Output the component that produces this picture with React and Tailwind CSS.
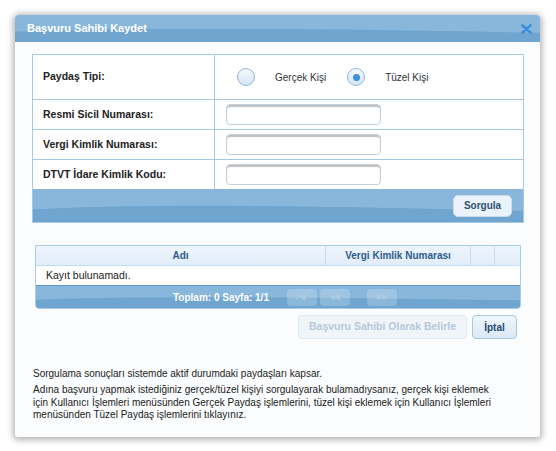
import React from "react";

// Blue gradient bar with a soft wave, used in title, action bar and pager
function Wave() {
  return (
    <svg
      className="absolute inset-0 h-full w-full pointer-events-none"
      viewBox="0 0 100 10"
      preserveAspectRatio="none"
    >
      <path d="M0 6.2 C 25 4.2, 60 5.2, 100 6.6 L100 10 L0 10 Z" fill="#6fa5cf" />
    </svg>
  );
}

function Radio({ checked }) {
  return (
    <span className="relative inline-flex h-[18px] w-[18px] shrink-0 items-center justify-center rounded-full border border-[#8fb8dc] bg-gradient-to-b from-[#f4f8fc] to-[#d6e6f5]">
      {checked && <span className="h-[7px] w-[7px] rounded-full bg-[#3f8fdb]" />}
    </span>
  );
}

function Field() {
  return (
    <div className="h-[21px] w-[155px] rounded-[4px] border border-[#c3cfd9] bg-white shadow-[inset_0_2px_1px_rgba(0,0,0,0.25)]" />
  );
}

function PagerBtn({ children, className = "" }) {
  return (
    <span
      className={
        "relative flex h-[17px] w-[30px] items-center justify-center rounded-[4px] bg-white/20 " + className
      }
    >
      {children}
    </span>
  );
}

const rows = ["Resmi Sicil Numarası:", "Vergi Kimlik Numarası:", "DTVT İdare Kimlik Kodu:"];

export default function App() {
  return (
    <div
      className="h-[451px] w-[556px] bg-white pl-[15px] pt-[15px]"
      style={{ fontFamily: "'Liberation Sans', Arial, sans-serif" }}
    >
      <div className="h-[422px] w-[525px] overflow-hidden rounded-t-[4px] rounded-b-[3px] bg-[#fafcfd] shadow-[0_1px_6px_2px_rgba(0,0,0,0.3)]">
        {/* title bar */}
        <div className="relative flex h-[27px] items-center justify-between bg-[#89b7db] pl-[12px] pr-[8px]">
          <Wave />
          <span className="relative text-[11px] font-bold text-white">Başvuru Sahibi Kaydet</span>
          <svg className="relative" width="11" height="10" viewBox="0 0 11 10">
            <path d="M1.5 1.5 L9.5 8.5 M9.5 1.5 L1.5 8.5" stroke="#3b8ed6" strokeWidth="2.6" strokeLinecap="round" />
          </svg>
        </div>

        <div className="pl-[17px] pt-[12px]">
          {/* form */}
          <div className="w-[492px] border border-[#a4c9e7] bg-white">
            <div className="flex h-[45px] border-b border-[#a4c9e7]">
              <div className="flex w-[182px] items-center border-r border-[#a4c9e7] pl-[10px] text-[10.5px] font-bold text-[#222]">
                Paydaş Tipi:
              </div>
              <div className="flex items-center pl-[22px] text-[10px] text-[#333]">
                <Radio />
                <span className="ml-[20px]">Gerçek Kişi</span>
                <span className="ml-[21px] flex"><Radio checked /></span>
                <span className="ml-[20px]">Tüzel Kişi</span>
              </div>
            </div>
            {rows.map((r, i) => (
              <div key={r} className={i < 2 ? "flex h-[30px] border-b border-[#a4c9e7]" : "flex h-[29px]"}>
                <div className="flex w-[182px] items-center border-r border-[#a4c9e7] pl-[10px] text-[10.5px] font-bold text-[#222]">
                  {r}
                </div>
                <div className="flex items-center pl-[11px]">
                  <Field />
                </div>
              </div>
            ))}
            <div className="relative flex h-[33px] items-center justify-end bg-[#89b7db] pr-[11px]">
              <Wave />
              <button className="relative h-[22px] w-[59px] rounded-[5px] border border-[#c7dcee] bg-[#eaf3fb] text-[10px] font-bold text-[#2f4f70]">
                Sorgula
              </button>
            </div>
          </div>

          {/* grid */}
          <div className="ml-[3px] mt-[22px] w-[486px] overflow-hidden rounded-b-[4px] border border-[#a8cbe8]">
            <div className="flex h-[20px] border-b border-[#c5dbef] bg-gradient-to-b from-[#eef5fc] to-[#e1edf9] text-[10px] font-bold text-[#2e5d8c]">
              <div className="flex w-[290px] items-center justify-center border-r border-[#c5dbef]">Adı</div>
              <div className="flex w-[145px] items-center justify-center border-r border-[#c5dbef]">Vergi Kimlik Numarası</div>
              <div className="w-[24px] border-r border-[#c5dbef]" />
              <div className="flex-1" />
            </div>
            <div className="flex h-[19px] items-center bg-white pl-[10px] text-[10.5px] text-[#222]">
              Kayıt bulunamadı.
            </div>
            <div className="relative flex h-[23px] items-center border-t border-[#5f98c7] bg-[#89b7db]">
              <Wave />
              <span className="relative ml-[137px] text-[10px] font-bold text-white">Toplam: 0 Sayfa: 1/1</span>
              <PagerBtn className="ml-[18px]">
                <svg width="9" height="6" viewBox="0 0 9 6"><path d="M0.5 0 V6 M8 0 L2.5 3 L8 6 Z" stroke="#a9cbe8" fill="#a9cbe8" strokeWidth="1" /></svg>
              </PagerBtn>
              <PagerBtn className="ml-[3px]">
                <svg width="10" height="6" viewBox="0 0 10 6"><path d="M5 0 L0.5 3 L5 6 M9.5 0 L5 3 L9.5 6 Z" stroke="#a9cbe8" fill="#a9cbe8" strokeWidth="1" /></svg>
              </PagerBtn>
              <PagerBtn className="ml-[17px]">
                <svg width="10" height="6" viewBox="0 0 10 6"><path d="M0.5 0 L5 3 L0.5 6 Z M5 0 L9.5 3 L5 6" stroke="#a9cbe8" fill="#a9cbe8" strokeWidth="1" /></svg>
              </PagerBtn>
            </div>
          </div>

          {/* action buttons */}
          <div className="mt-[6px] flex w-[492px] justify-end gap-[5px] pr-[7px]">
            <button className="h-[24px] w-[169px] whitespace-nowrap rounded-[4px] border border-[#dfe9f3] bg-[#f0f5fa] text-[10.5px] font-bold text-[#b6c8d9]">
              Başvuru Sahibi Olarak Belirle
            </button>
            <button className="h-[24px] w-[45px] rounded-[4px] border border-[#a9c7e1] bg-gradient-to-b from-[#eef5fc] to-[#dce9f6] text-[10px] font-bold text-[#234a70]">
              İptal
            </button>
          </div>

          {/* notes */}
          <div className="mt-[29px] whitespace-nowrap pl-[1px] text-[10px] leading-[12.5px] text-[#222]">
            <p>Sorgulama sonuçları sistemde aktif durumdaki paydaşları kapsar.</p>
            <p className="mt-[3.5px]">
              Adına başvuru yapmak istediğiniz gerçek/tüzel kişiyi sorgulayarak bulamadıysanız, gerçek kişi eklemek
              <br />
              için Kullanıcı İşlemleri menüsünden Gerçek Paydaş işlemlerini, tüzel kişi eklemek için Kullanıcı İşlemleri
              <br />
              menüsünden Tüzel Paydaş işlemlerini tıklayınız.
            </p>
          </div>
        </div>
      </div>
    </div>
  );
}
